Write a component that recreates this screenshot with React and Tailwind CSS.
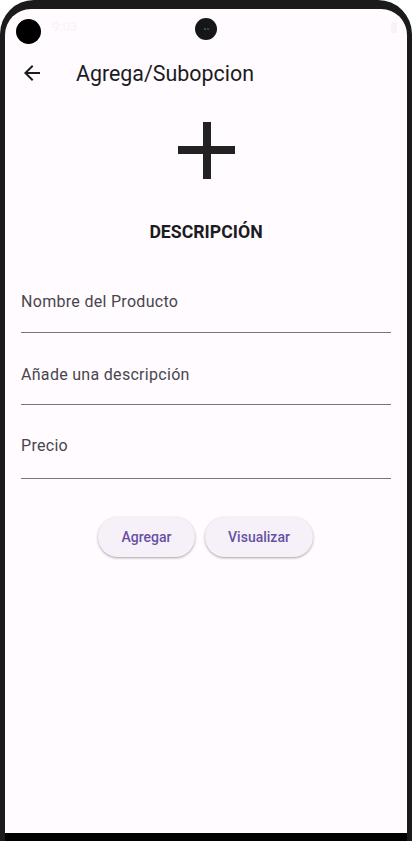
export default function App() {
  return (
    <div className="w-[412px] h-[841px] bg-white overflow-hidden" style={{ fontFamily: "Roboto, 'Noto Sans', sans-serif" }}>
      <div className="h-full flex flex-col rounded-t-[34px] bg-[#1b1b1b] px-[5px] pt-[9px]">
        <div className="relative flex-1 flex flex-col bg-[#fffbfe] rounded-t-[26px] overflow-hidden">
          {/* status bar */}
          <div className="relative h-[36px] flex items-center px-[47px]">
            <span className="text-[13px] text-[#f7f2f7]">9:03</span>
            <div className="absolute left-[11px] top-[10px] w-[25px] h-[25px] rounded-full bg-black" />
            <div className="absolute left-[190px] top-[9px] w-[22px] h-[22px] rounded-full bg-[#161616] flex items-center justify-center gap-[1px]">
              <div className="w-[2px] h-[2px] rounded-full bg-[#2f6a6a]" />
              <div className="w-[2px] h-[2px] rounded-full bg-[#3a4ea0]" />
            </div>
            <div className="absolute right-[10px] top-[13px] w-[6px] h-[11px] rounded-[1px] bg-[#f8f3f8]" />
          </div>
          {/* app bar */}
          <div className="h-[56px] flex items-center">
            <div className="w-[71px] flex items-center pl-[15px]">
              <svg width="24" height="24" viewBox="0 0 24 24" fill="none">
                <path d="M20 11H7.83l5.59-5.59L12 4l-8 8 8 8 1.41-1.41L7.83 13H20v-2z" fill="#1c1b1f" />
              </svg>
            </div>
            <span className="text-[21.4px] leading-[28px] text-[#1c1b1f] pt-[1px]">Agrega/Subopcion</span>
          </div>
          {/* plus */}
          <div className="flex justify-center mt-[21px]">
            <svg width="57" height="57" viewBox="0 0 57 57">
              <rect x="25" y="0" width="8" height="57" fill="#222222" />
              <rect x="0" y="24" width="57" height="8" fill="#222222" />
            </svg>
          </div>
          <div className="text-center mt-[41px] text-[17.7px] leading-[24px] font-bold text-[#1c1b1f]">DESCRIPCIÓN</div>
          {/* fields */}
          <div className="px-[16px] mt-[46px] flex flex-col">
            <div className="h-[43px] border-b border-[#79747e]">
              <div className="text-[16px] leading-[24px] text-[#49454f] tracking-[0.3px]">Nombre del Producto</div>
            </div>
            <div className="h-[72px] pt-[30px] border-b border-[#79747e]">
              <div className="text-[16px] leading-[24px] text-[#49454f] tracking-[0.3px]">Añade una descripción</div>
            </div>
            <div className="h-[74px] pt-[29px] border-b border-[#79747e]">
              <div className="text-[16px] leading-[24px] text-[#49454f] tracking-[0.3px]">Precio</div>
            </div>
          </div>
          {/* buttons */}
          <div className="flex justify-center gap-[10px] mt-[38px] pr-[1px]">
            <button className="h-[40px] w-[97px] rounded-full bg-[#f6f1f8] text-[#6750a4] text-[14px] font-medium shadow-[0_1px_2px_rgba(0,0,0,0.25),0_1px_3px_1px_rgba(0,0,0,0.08)]">Agregar</button>
            <button className="h-[40px] w-[108px] rounded-full bg-[#f6f1f8] text-[#6750a4] text-[14px] font-medium shadow-[0_1px_2px_rgba(0,0,0,0.25),0_1px_3px_1px_rgba(0,0,0,0.08)]">Visualizar</button>
          </div>
          <div className="flex-1" />
        </div>
        <div className="h-[8px] bg-black" />
      </div>
    </div>
  );
}
